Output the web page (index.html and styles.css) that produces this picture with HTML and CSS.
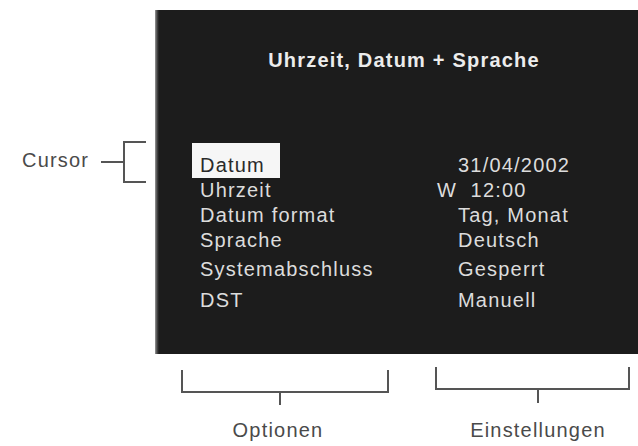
FILE: index.html
```html
<!DOCTYPE html>
<html lang="de">
<head>
<meta charset="utf-8">
<title>Uhrzeit, Datum + Sprache</title>
<link rel="stylesheet" href="styles.css">
</head>
<body>
<div class="page">
  <div class="top">
    <div class="side">
      <div class="cursor-note">
        <span class="note-text">Cursor</span>
        <svg class="cursor-bracket" width="50" height="44" viewBox="0 0 50 44" aria-hidden="true">
          <path d="M2 22 H25 M47 2 H25 V42 H47" fill="none" stroke="#555" stroke-width="2"/>
        </svg>
      </div>
    </div>
    <section class="panel">
      <h1 class="title">Uhrzeit, Datum + Sprache</h1>
      <div class="menu">
        <div class="row">
          <div class="label"><span class="cursor">Datum</span></div>
          <div class="value">31/04/2002</div>
        </div>
        <div class="row">
          <div class="label">Uhrzeit</div>
          <div class="value lead">W  12:00</div>
        </div>
        <div class="row">
          <div class="label">Datum format</div>
          <div class="value">Tag, Monat</div>
        </div>
        <div class="row">
          <div class="label">Sprache</div>
          <div class="value">Deutsch</div>
        </div>
        <div class="row gap-a">
          <div class="label">Systemabschluss</div>
          <div class="value">Gesperrt</div>
        </div>
        <div class="row gap-b">
          <div class="label">DST</div>
          <div class="value">Manuell</div>
        </div>
      </div>
    </section>
  </div>
  <div class="legend">
    <div class="group group-left">
      <svg width="210" height="40" viewBox="0 0 210 40" aria-hidden="true">
        <path d="M2 4 V26 H208 V4 M100 26 V39" fill="none" stroke="#555" stroke-width="2"/>
      </svg>
      <span class="legend-label left">Optionen</span>
    </div>
    <div class="group group-right">
      <svg width="197" height="40" viewBox="0 0 197 40" aria-hidden="true">
        <path d="M2 1 V23 H195 V1 M104 23 V37" fill="none" stroke="#555" stroke-width="2"/>
      </svg>
      <span class="legend-label right">Einstellungen</span>
    </div>
  </div>
</div>
</body>
</html>
```
FILE: styles.css
```css
html, body {
  margin: 0;
  padding: 0;
  background: #ffffff;
}

body {
  font-family: "Liberation Sans", Arial, Helvetica, sans-serif;
  font-size: 20px;
  letter-spacing: 1.2px;
  color: #4a4a4a;
}

.page {
  width: 638px;
  height: 446px;
  overflow: hidden;
}

.top {
  display: flex;
  align-items: flex-start;
}

.side {
  flex: none;
  width: 155px;
  padding-top: 140px;
}

.cursor-note {
  display: flex;
  align-items: center;
  height: 44px;
  padding-left: 22px;
  gap: 10px;
}

.note-text {
  line-height: 24px;
  margin-top: -4px;
  color: #4a4a4a;
}

.cursor-bracket {
  display: block;
}

.panel {
  flex: none;
  width: 483px;
  height: 344px;
  margin-top: 10px;
  box-sizing: border-box;
  padding-top: 38px;
  background:
    linear-gradient(to right, #9a9a9a 0, #4a4a4a 2px, #1c1c1c 4px);
  color: #dcdcdc;
}

.title {
  margin: 0;
  padding-left: 15px;
  text-align: center;
  font-size: 20px;
  font-weight: bold;
  line-height: 24px;
  letter-spacing: 1.2px;
  color: #ececec;
}

.menu {
  margin-top: 81px;
  padding-left: 45px;
}

.row {
  display: flex;
  height: 25px;
  line-height: 25px;
  white-space: pre;
}

.row.gap-a {
  margin-top: 4px;
}

.row.gap-b {
  margin-top: 6px;
}

.label {
  flex: none;
  width: 237px;
}

.cursor {
  display: block;
  width: 88px;
  box-sizing: border-box;
  margin: -10px 0 0 -8px;
  padding: 10px 0 0 8px;
  background: #f6f6f6;
  color: #2a2a2a;
}

.value {
  margin-left: 21px;
}

.value.lead {
  margin-left: 0;
}

.legend {
  display: flex;
  align-items: flex-start;
  padding-left: 180px;
  gap: 44px;
  margin-top: 12px;
}

.group {
  display: flex;
  flex-direction: column;
  align-items: center;
}

.group svg {
  display: block;
}

.legend-label {
  margin-top: 12px;
  line-height: 24px;
  color: #4a4a4a;
}

.legend-label.left {
  padding-right: 14px;
}

.legend-label.right {
  padding-left: 11px;
}
```
